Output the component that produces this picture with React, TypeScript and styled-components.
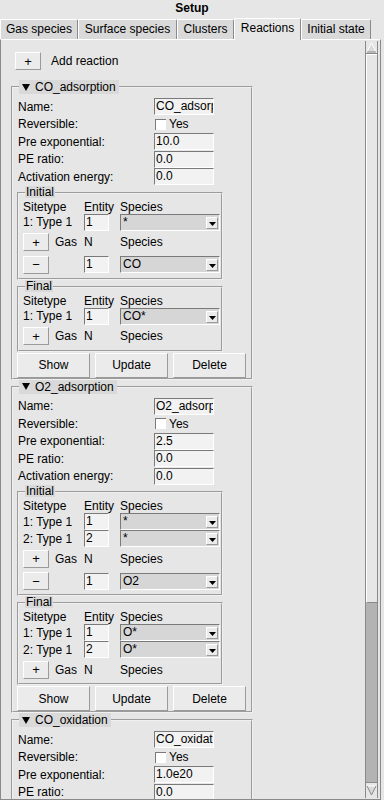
import React from "react";
import styled, { createGlobalStyle } from "styled-components";

const GlobalStyle = createGlobalStyle`
  html, body {
    margin: 0;
    padding: 0;
    background: #e6e6e6;
  }
  body {
    font-family: "Liberation Sans", Arial, sans-serif;
    font-size: 12px;
    color: #000;
  }
`;

type Site = [string, string, string];
type Gas = [string, string];

interface Reaction {
  name: string;
  pre: string;
  pe: string;
  act: string;
  initial: { sites: Site[]; gas: Gas[] };
  final: { sites: Site[]; gas: Gas[] };
}

const reactions: Reaction[] = [
  {
    name: "CO_adsorption",
    pre: "10.0",
    pe: "0.0",
    act: "0.0",
    initial: { sites: [["1: Type 1", "1", "*"]], gas: [["1", "CO"]] },
    final: { sites: [["1: Type 1", "1", "CO*"]], gas: [] },
  },
  {
    name: "O2_adsorption",
    pre: "2.5",
    pe: "0.0",
    act: "0.0",
    initial: {
      sites: [["1: Type 1", "1", "*"], ["2: Type 1", "2", "*"]],
      gas: [["1", "O2"]],
    },
    final: {
      sites: [["1: Type 1", "1", "O*"], ["2: Type 1", "2", "O*"]],
      gas: [],
    },
  },
  {
    name: "CO_oxidation",
    pre: "1.0e20",
    pe: "0.0",
    act: "0.0",
    initial: {
      sites: [["1: Type 1", "1", "CO*"], ["2: Type 1", "2", "O*"]],
      gas: [],
    },
    final: {
      sites: [["1: Type 1", "1", "*"], ["2: Type 1", "2", "*"]],
      gas: [["1", "CO2"]],
    },
  },
];

const tabs = [
  { label: "Gas species", width: 78 },
  { label: "Surface species", width: 99 },
  { label: "Clusters", width: 57 },
  { label: "Reactions", width: 67 },
  { label: "Initial state", width: 70 },
];

export default function App() {
  return (
    <>
      <GlobalStyle />
      <Window>
        <Title>Setup</Title>
        <TabBar>
          {tabs.map((t) => (
            <Tab key={t.label} $w={t.width} $selected={t.label === "Reactions"}>
              {t.label}
            </Tab>
          ))}
        </TabBar>
        <Panel>
          <Viewport>
            <AddRow>
              <SmallButton>+</SmallButton>
              <span>Add reaction</span>
            </AddRow>
            {reactions.map((r) => (
              <ReactionBox key={r.name} reaction={r} />
            ))}
          </Viewport>
          <Scrollbar>
            <ScrollArrow>
              <svg width="11" height="11" viewBox="0 0 11 11">
                <path d="M5.5 1 L10 10 L1 10 Z" fill="#d9d9d9" />
                <path d="M1 10 L5.5 1 L10 10" fill="none" stroke="#fff" strokeWidth="1" />
                <path d="M1 10 L10 10" stroke="#8a8a8a" strokeWidth="1" />
              </svg>
            </ScrollArrow>
            <ScrollThumb />
            <ScrollTrough />
            <ScrollArrow $bottom>
              <svg width="11" height="11" viewBox="0 0 11 11">
                <path d="M1 1 L10 1 L5.5 10 Z" fill="#d9d9d9" />
                <path d="M1 1 L10 1" stroke="#fff" strokeWidth="1" />
                <path d="M1 1 L5.5 10 L10 1" fill="none" stroke="#8a8a8a" strokeWidth="1" />
              </svg>
            </ScrollArrow>
          </Scrollbar>
        </Panel>
      </Window>
    </>
  );
}

const ReactionBox = ({ reaction }: { reaction: Reaction }) => {
  return (
    <ReactionFrame>
      <FrameLegend>
        <svg width="8" height="7" viewBox="0 0 8 7">
          <path d="M0 0 L8 0 L4 7 Z" fill="#000" />
        </svg>
        {reaction.name}
      </FrameLegend>
      <FormGrid>
        <FieldLabel>Name:</FieldLabel>
        <Entry>{reaction.name}</Entry>
        <FieldLabel>Reversible:</FieldLabel>
        <CheckRow>
          <CheckBox />
          Yes
        </CheckRow>
        <FieldLabel>Pre exponential:</FieldLabel>
        <Entry>{reaction.pre}</Entry>
        <FieldLabel>PE ratio:</FieldLabel>
        <Entry>{reaction.pe}</Entry>
        <FieldLabel>Activation energy:</FieldLabel>
        <Entry>{reaction.act}</Entry>
      </FormGrid>
      <StateBox title="Initial" state={reaction.initial} />
      <StateBox title="Final" state={reaction.final} />
      <ButtonRow>
        <ActionButton>Show</ActionButton>
        <ActionButton>Update</ActionButton>
        <ActionButton>Delete</ActionButton>
      </ButtonRow>
    </ReactionFrame>
  );
};

const StateBox = ({ title, state }: { title: string; state: { sites: Site[]; gas: Gas[] } }) => {
  return (
    <SubFrame>
      <SubLegend>
        <LegendText>{title}</LegendText>
      </SubLegend>
      <SiteGrid>
        <Cell $h={14}>Sitetype</Cell>
        <Cell $h={14}>Entity</Cell>
        <Cell $h={14}>Species</Cell>
        {state.sites.map(([type, n, sp]) => (
          <React.Fragment key={type}>
            <Cell $h={17}>{type}</Cell>
            <Cell $h={17}>
              <SmallEntry>{n}</SmallEntry>
            </Cell>
            <Cell $h={17}>
              <Combo value={sp} />
            </Cell>
          </React.Fragment>
        ))}
        <Cell $h={23} $gap={6}>
          <SmallButton>+</SmallButton>
          <span>Gas</span>
        </Cell>
        <Cell $h={23}>N</Cell>
        <Cell $h={23}>Species</Cell>
        {state.gas.map(([n, sp]) => (
          <React.Fragment key={sp}>
            <Cell $h={22}>
              <SmallButton>−</SmallButton>
            </Cell>
            <Cell $h={22}>
              <SmallEntry>{n}</SmallEntry>
            </Cell>
            <Cell $h={22}>
              <Combo value={sp} />
            </Cell>
          </React.Fragment>
        ))}
      </SiteGrid>
    </SubFrame>
  );
};

const Combo = ({ value }: { value: string }) => (
  <ComboBox>
    <ComboText>{value}</ComboText>
    <ComboArrow>
      <svg width="7" height="4" viewBox="0 0 7 4">
        <path d="M0 0 L7 0 L3.5 4 Z" fill="#000" />
      </svg>
    </ComboArrow>
  </ComboBox>
);

const Window = styled.div`
  width: 384px;
  height: 800px;
  display: flex;
  flex-direction: column;
  overflow: hidden;
`;

const Title = styled.div`
  height: 17px;
  line-height: 17px;
  text-align: center;
  font-weight: bold;
`;

const TabBar = styled.div`
  height: 22px;
  display: flex;
  align-items: flex-end;
`;

const Tab = styled.div<{ $w: number; $selected?: boolean }>`
  box-sizing: border-box;
  width: ${(p) => p.$w}px;
  height: ${(p) => (p.$selected ? 22 : 20)}px;
  margin-bottom: ${(p) => (p.$selected ? -1 : 0)}px;
  position: relative;
  z-index: ${(p) => (p.$selected ? 1 : 0)};
  background: ${(p) => (p.$selected ? "#e6e6e6" : "#d9d9d9")};
  border-top: 1px solid #fff;
  border-left: 1px solid #fff;
  border-right: 1px solid #8a8a8a;
  border-top-right-radius: 2px;
  text-align: center;
  line-height: ${(p) => (p.$selected ? 19 : 18)}px;
  white-space: nowrap;
`;

const Panel = styled.div`
  flex: 1;
  min-height: 0;
  width: 381px;
  box-sizing: border-box;
  display: flex;
  border-top: 1px solid #fff;
  border-left: 1px solid #8a8a8a;
  border-right: 1px solid #8a8a8a;
  border-bottom: 1px solid #8a8a8a;
`;

const Viewport = styled.div`
  flex: 1;
  overflow: hidden;
  padding: 12px 0 0 0;
`;

const Scrollbar = styled.div`
  width: 13px;
  box-sizing: border-box;
  margin: 1px 2px 1px 0;
  display: flex;
  flex-direction: column;
  border-left: 1px solid #8a8a8a;
  border-right: 1px solid #8a8a8a;
  background: #b3b3b3;
`;

const ScrollArrow = styled.div<{ $bottom?: boolean }>`
  height: ${(p) => (p.$bottom ? 15 : 12)}px;
  flex-shrink: 0;
  background: #e6e6e6;
  border-top: ${(p) => (p.$bottom ? "1px solid #8a8a8a" : "none")};
  border-bottom: ${(p) => (p.$bottom ? "none" : "1px solid #8a8a8a")};
  display: flex;
  align-items: center;
  justify-content: center;
`;

const ScrollThumb = styled.div`
  height: 549px;
  flex-shrink: 0;
  box-sizing: border-box;
  background: #e6e6e6;
  border-left: 1px solid #fff;
  border-top: 1px solid #fff;
  border-bottom: 1px solid #8a8a8a;
`;

const ScrollTrough = styled.div`
  flex: 1;
`;

const AddRow = styled.div`
  display: flex;
  align-items: center;
  gap: 10px;
  padding-left: 14px;
  height: 18px;
  margin-bottom: 10px;
`;

const SmallButton = styled.div`
  box-sizing: border-box;
  width: 26px;
  height: 18px;
  background: #ebebeb;
  border-top: 1px solid #fff;
  border-left: 1px solid #fff;
  border-right: 1px solid #9a9a9a;
  border-bottom: 1px solid #9a9a9a;
  display: flex;
  align-items: center;
  justify-content: center;
  font-size: 13px;
  line-height: 1;
`;

const ReactionFrame = styled.fieldset`
  margin: 0 0 0 10px;
  width: 242px;
  box-sizing: border-box;
  padding: 0 4px 0 4px;
  border: 2px groove #f0f0f0;
  min-width: 0;
`;

const FrameLegend = styled.legend`
  margin-left: 2px;
  padding: 0 3px 0 3px;
  height: 14px;
  line-height: 14px;
  background: #d9d9d9;
  display: flex;
  align-items: center;
  gap: 5px;
  white-space: nowrap;
`;

const FormGrid = styled.div`
  display: grid;
  grid-template-columns: 136px 60px;
  grid-auto-rows: 17.5px;
  align-items: center;
  padding: 4px 0 0 1px;
`;

const FieldLabel = styled.div`
  white-space: nowrap;
`;

const Entry = styled.div`
  box-sizing: border-box;
  height: 17px;
  width: 60px;
  padding: 0 1px;
  line-height: 15px;
  background: #f2f2f2;
  border-top: 1px solid #7a7a7a;
  border-left: 1px solid #7a7a7a;
  border-right: 1px solid #fff;
  border-bottom: 1px solid #fff;
  overflow: hidden;
  white-space: nowrap;
`;

const CheckRow = styled.div`
  display: flex;
  align-items: center;
  gap: 3px;
  padding-left: 1px;
`;

const CheckBox = styled.div`
  box-sizing: border-box;
  width: 11px;
  height: 11px;
  background: #fff;
  border-top: 1px solid #7a7a7a;
  border-left: 1px solid #7a7a7a;
`;

const SubFrame = styled.fieldset`
  margin: 0;
  padding: 0 0 2px 4px;
  width: 206px;
  box-sizing: border-box;
  border: 2px groove #f0f0f0;
  min-width: 0;
`;

const SubLegend = styled.legend`
  margin-left: 2px;
  padding: 0;
  height: 14px;
`;

const LegendText = styled.div`
  height: 12px;
  line-height: 12px;
  padding: 0 1px;
  background: #d9d9d9;
`;

const SiteGrid = styled.div`
  display: grid;
  grid-template-columns: 61px 36px 100px;
  align-items: center;
`;

const Cell = styled.div<{ $h: number; $gap?: number }>`
  height: ${(p) => p.$h}px;
  display: flex;
  align-items: center;
  gap: ${(p) => p.$gap ?? 0}px;
  white-space: nowrap;
`;

const SmallEntry = styled(Entry)`
  width: 25px;
  height: 17px;
`;

const ComboBox = styled.div`
  box-sizing: border-box;
  width: 100px;
  height: 17px;
  display: flex;
  background: #d6d6d6;
  border-top: 1px solid #7a7a7a;
  border-left: 1px solid #7a7a7a;
  border-right: 1px solid #fff;
  border-bottom: 1px solid #fff;
`;

const ComboText = styled.div`
  flex: 1;
  padding-left: 2px;
  line-height: 14px;
  white-space: nowrap;
  overflow: hidden;
`;

const ComboArrow = styled.div`
  box-sizing: border-box;
  width: 12px;
  margin: 2px 1px 1px 0;
  background: #ebebeb;
  border-top: 1px solid #fff;
  border-left: 1px solid #fff;
  border-right: 1px solid #9a9a9a;
  border-bottom: 1px solid #9a9a9a;
  display: flex;
  align-items: flex-end;
  justify-content: center;
  padding-bottom: 2px;
`;

const ButtonRow = styled.div`
  display: flex;
  gap: 5px;
  padding-top: 1px;
`;

const ActionButton = styled.div`
  box-sizing: border-box;
  width: 73px;
  height: 25px;
  background: #ebebeb;
  border-top: 1px solid #fff;
  border-left: 1px solid #fff;
  border-right: 1px solid #9a9a9a;
  border-bottom: 1px solid #9a9a9a;
  display: flex;
  align-items: center;
  justify-content: center;
`;
